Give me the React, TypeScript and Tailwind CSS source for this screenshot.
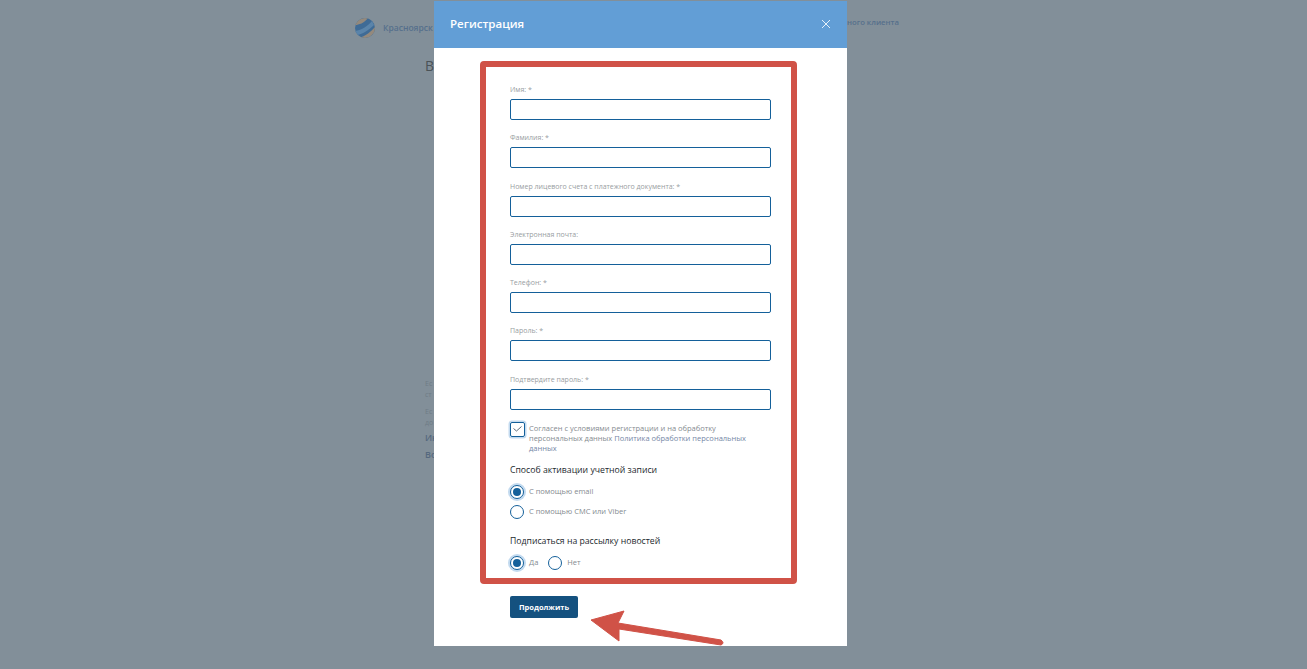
const fields = [
  'Имя: *',
  'Фамилия: *',
  'Номер лицевого счета с платежного документа: *',
  'Электронная почта:',
  'Телефон: *',
  'Пароль: *',
  'Подтвердите пароль: *',
]

function Radio({ checked, label }: { checked?: boolean; label: string }) {
  return (
    <label className="flex items-center gap-[5px]">
      <span
        className={`flex h-[14px] w-[14px] shrink-0 items-center justify-center rounded-full border border-[#14609a] bg-white ${
          checked ? 'shadow-[0_0_0_2px_#c3daef]' : ''
        }`}
      >
        {checked && <span className="h-[8px] w-[8px] rounded-full bg-[#14609a]" />}
      </span>
      <span className="text-[7.5px] leading-[10px] text-[#858b90] -translate-y-[1px]">{label}</span>
    </label>
  )
}

export default function App() {
  return (
    <div className="relative h-[669px] w-[1307px] overflow-hidden bg-[#828f99] font-['Open_Sans','Noto_Sans',sans-serif]">
      {/* Page behind the overlay */}
      <div className="absolute left-[355px] top-[18px] flex items-center gap-[8px]">
        <svg width="20" height="20" viewBox="0 0 20 20">
          <defs>
            <clipPath id="ball">
              <circle cx="10" cy="10" r="10" />
            </clipPath>
          </defs>
          <g clipPath="url(#ball)">
            <rect width="20" height="20" fill="#3f6b96" />
            <path d="M0 7 C4 7 9 5 13 0 L8 0 L0 3 Z" fill="#94897c" />
            <path d="M4 20 C10 18 16 14 20 9 L20 14 L14 20 Z" fill="#94897c" />
            <path d="M0 13 C7 12 13 8 17 3 L19 7 C14 12 8 16 2 17 Z" fill="#5a84aa" />
          </g>
        </svg>
        <span className="text-[8.5px] font-semibold text-[#566f8c]">Красноярск</span>
      </div>
      <span className="absolute left-[847px] top-[16px] text-[7.7px] leading-[12px] font-semibold text-[#566f8c]">ного клиента</span>
      <span className="absolute left-[425px] top-[55px] text-[14px] text-[#4a5257]">В</span>
      <div className="absolute left-[425px] top-[378px] text-[7px] leading-[11px] text-[#6f7c86]">
        <p>Ес</p>
        <p>ст</p>
        <p className="mt-[6px]">Ес</p>
        <p>до</p>
      </div>
      <div className="absolute left-[425px] top-[429px] text-[9px] font-semibold leading-[17px] text-[#55687e]">
        <p>Ин</p>
        <p>Во</p>
      </div>

      {/* Modal */}
      <div className="absolute left-[434px] top-[1px] flex h-[645px] w-[413px] flex-col bg-white">
        <div className="flex h-[47px] shrink-0 items-center justify-between bg-[#629ed6] pl-[16px] pr-[16px]">
          <h2 className="text-[11.5px] font-semibold text-white -translate-y-[1px]">Регистрация</h2>
          <svg width="10" height="10" viewBox="0 0 10 10" className="-translate-y-[1px] text-[#e6f0f9]" fill="none" stroke="currentColor" strokeWidth="1">
            <path d="M1 1l8 8M9 1L1 9" />
          </svg>
        </div>

        <form className="flex flex-col pl-[76px] pr-[76px] pt-[37px]">
          {fields.map((label) => (
            <div key={label} className="mb-[13.3px]">
              <div className="h-[14px] text-[7px] leading-[9px] text-[#989da1]">{label}</div>
              <div className="h-[21px] w-[261px] rounded-[2px] border border-[#14609a] bg-white" />
            </div>
          ))}

          <div className="-mt-[0.3px] flex gap-[4px]">
            <span className="-mt-[1px] flex h-[15px] w-[15px] shrink-0 items-center justify-center rounded-[2px] border border-[#14609a] shadow-[0_0_0_1.5px_#c3daef]">
              <svg width="9" height="6" viewBox="0 0 9 6" fill="none" stroke="#5d6b78" strokeWidth="1">
                <path d="M0.5 2.5L3.5 5 8.5 0.5" />
              </svg>
            </span>
            <p className="w-[225px] text-[7.5px] leading-[10px] text-[#858b90]">
              Согласен с условиями регистрации и на обработку персональных данных{' '}
              <span className="text-[#7587a6]">Политика обработки персональных данных</span>
            </p>
          </div>

          <h3 className="mt-[10px] text-[8.7px] font-medium leading-[14px] text-[#23292e]">Способ активации учетной записи</h3>
          <div className="mt-[8px] flex flex-col gap-[6px]">
            <Radio checked label="С помощью email" />
            <Radio label="С помощью СМС или Viber" />
          </div>

          <h3 className="mt-[15px] text-[8.7px] font-medium leading-[14px] text-[#23292e]">Подписаться на рассылку новостей</h3>
          <div className="mt-[8px] flex items-center gap-[10px]">
            <Radio checked label="Да" />
            <Radio label="Нет" />
          </div>

          <button type="button" className="mt-[26px] flex h-[22px] w-[68px] items-center justify-center rounded-[2px] bg-[#14517f] pt-[1px] text-[7.5px] font-bold text-white">
            Продолжить
          </button>
        </form>
      </div>

      {/* Red annotation */}
      <div className="absolute left-[480px] top-[61px] h-[523px] w-[317px] rounded-[4px] border-[6px] border-[#d05247]" />
      <svg className="absolute left-[585px] top-[605px]" width="145" height="45" viewBox="0 0 145 45">
        <path d="M6 15L39 6L33 18L136 35Q140 38 136 40L34 24L34 36Z" fill="#d05247" stroke="#d05247" strokeWidth="1" strokeLinejoin="round" />
      </svg>
    </div>
  )
}
